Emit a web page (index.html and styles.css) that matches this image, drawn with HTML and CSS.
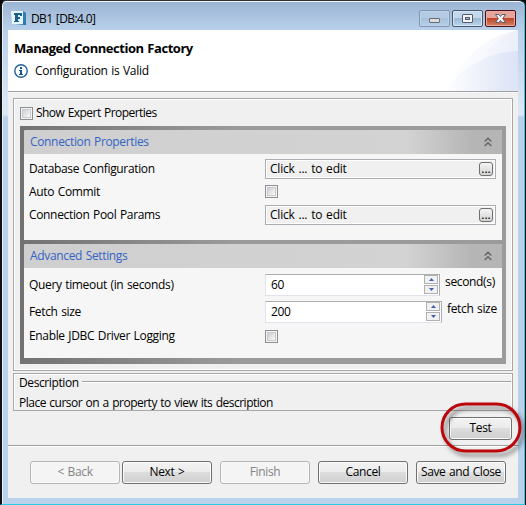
FILE: index.html
```html
<!DOCTYPE html>
<html lang="en">
<head>
<meta charset="utf-8">
<title>DB1 [DB:4.0]</title>
<link rel="stylesheet" href="styles.css">
</head>
<body>
<div class="window">
  <div class="titlebar">
    <svg class="app-icon" width="16" height="16" viewBox="0 0 16 16"><path d="M1 1L13 2L15 4V15L4 14L1 13Z" fill="#1d6d9e"/><path d="M0 1H12V14H1Z" fill="#eaf5fb"/><path d="M12 1L15 3V14L12 13Z" fill="#2b80b4"/><path d="M3 3H11V6H9V5H7V7H9V9H7V11H8V12H3V11H4V5H3Z" fill="#17618e"/></svg>
    <span class="title">DB1 [DB:4.0]</span>
    <div class="controls">
      <span class="control min"><svg width="29" height="15"><rect x="9.5" y="7.5" width="10" height="4" rx=".5" fill="#ddd" stroke="#666c74"/></svg></span>
      <span class="control max"><svg width="29" height="15"><rect x="9.5" y="3.5" width="10" height="8" rx=".5" fill="#f4f4f4" stroke="#55596c"/><rect x="12.500" y="6.500" width="4" height="2" fill="#9bbbd9" stroke="#55596c"/></svg></span>
      <span class="control close"><svg width="29" height="15"><path d="M9.500 3.500H13L14.500 5.500L16 3.500H19.500L16.700 7.500L19.500 11.500H16L14.500 9.500L13 11.500H9.500L12.300 7.500Z" fill="#f5f5f5" stroke="#58606c"/></svg></span>
    </div>
  </div>
  <div class="content">
    <header class="banner">
      <svg class="swoosh" width="80" height="61" viewBox="0 0 80 61"><defs><linearGradient id="a"><stop stop-color="#fff"/><stop offset="1" stop-color="#e6ebf8"/></linearGradient><linearGradient id="b"><stop stop-color="#fff"/><stop offset="1" stop-color="#dce3f6"/></linearGradient></defs><path d="M6 61Q36 7 80 0V61Z" fill="url(#a)" opacity=".55"/><path d="M36 42Q54 8 80 0V61H20Z" fill="url(#a)" opacity=".65"/><path d="M6 61Q38 22 80 21V61Z" fill="url(#b)"/></svg>
      <h1>Managed Connection Factory</h1>
      <p class="status"><svg width="14" height="14"><circle cx="7" cy="7" r="6.200" fill="#fff" stroke="#22639c" stroke-width="1.400"/><path d="M6 3H8V5H6ZM5 6H8V10H9V11H5V10H6V7H5Z" fill="#15568f"/></svg><span>Configuration is Valid</span></p>
    </header>
    <main>
      <div class="group">
        <label class="expert"><span class="check"></span><span>Show Expert Properties</span></label>
        <div class="panel">
          <section>
            <h2><span>Connection Properties</span><svg width="8" height="10"><path d="M.7 4.500L4 1.300L7.300 4.500M.7 9L4 5.800L7.300 9" fill="none" stroke="#666" stroke-width="1.500"/></svg></h2>
            <div class="rows connection">
              <span>Database Configuration</span><div class="field"><span>Click ... to edit</span><b>...</b></div>
              <span>Auto Commit</span><span class="check"></span>
              <span>Connection Pool Params</span><div class="field"><span>Click ... to edit</span><b>...</b></div>
            </div>
          </section>
          <section>
            <h2><span>Advanced Settings</span><svg width="8" height="10"><path d="M.7 4.500L4 1.300L7.300 4.500M.7 9L4 5.800L7.300 9" fill="none" stroke="#666" stroke-width="1.500"/></svg></h2>
            <div class="rows advanced">
              <span>Query timeout (in seconds)</span>
              <div class="value"><div class="spinner"><span>60</span><div class="arrows"><i><svg width="5" height="3"><path d="M0 3L2.500 0L5 3Z"/></svg></i><i><svg width="5" height="3"><path d="M0 0L2.500 3L5 0Z"/></svg></i></div></div><span class="unit">second(s)</span></div>
              <span>Fetch size</span>
              <div class="value"><div class="spinner wide"><span>200</span><div class="arrows"><i><svg width="5" height="3"><path d="M0 3L2.500 0L5 3Z"/></svg></i><i><svg width="5" height="3"><path d="M0 0L2.500 3L5 0Z"/></svg></i></div></div><span class="unit">fetch size</span></div>
              <span>Enable JDBC Driver Logging</span><span class="check"></span>
            </div>
          </section>
        </div>
      </div>
      <div class="description">
        <div class="legend"><span>Description</span><hr></div>
        <p>Place cursor on a property to view its description</p>
      </div>
      <div class="test-row"><div class="test-wrap"><button class="test">Test</button><svg class="highlight" width="96" height="66"><rect x="9" y="9" width="78" height="47" rx="23.500" fill="none" stroke="#bb070b" stroke-width="3"/></svg></div></div>
    </main>
    <footer>
      <button disabled>&lt; Back</button><button>Next &gt;</button><button class="spaced" disabled>Finish</button><button class="spaced">Cancel</button><button class="spaced save">Save and Close</button>
    </footer>
  </div>
</div>
</body>
</html>
```
FILE: styles.css
```css
* { box-sizing: border-box; }
body { margin: 0; background: #080808; font: 12px/16px "Open Sans", "Noto Sans", sans-serif; letter-spacing: -.34px; word-spacing: .8px; color: #000; white-space: nowrap; overflow: hidden; }
h1, h2, p, hr { margin: 0; font-weight: 400; }
svg { display: block; flex: none; }
.window { width: 525px; height: 505px; padding: 0 6px 6px; border: 1px solid #29cbe3; border-width: 1px 1px 1px 2px; border-top-color: #2e3035; border-left-color: #111; border-radius: 6px 6px 0 0; background: linear-gradient(#9bb4d3, #b9d1ea 30px, #dce8f6 110px, #dce8f6 114px, #b9d1ea 116px); box-shadow: inset 0 1px #f4f7fb, inset 1px 0 #e8f1fa; }
.titlebar { height: 29px; display: flex; align-items: flex-start; padding: 9px 2px 0 3px; }
.title { margin: 1px 0 0 4px; letter-spacing: -.6px; }
.controls { display: flex; gap: 2px; margin-left: auto; }
.control { width: 31px; height: 17px; border: 1px solid #48586e; border-radius: 2px; background: linear-gradient(#c4d8ec 49%, #9db9d5 50%, #bbd4ec); box-shadow: inset 0 0 0 1px #d5e5f4; }
.min { border-color: #8095b1; background: linear-gradient(#b4cae3 49%, #a8c0da 50%, #b7d0e9); box-shadow: inset 0 0 0 1px #bfd3e8; }
.close { border-color: #4a1119; background: linear-gradient(#e7a49b 48%, #c14628 50%, #d38062); box-shadow: inset 0 0 0 1px #e7aaa0; }
.content { height: 468px; width: 510px; background: #f0f0f0; }
.banner { position: relative; height: 63px; padding: 9px 6px; background: #fff; border-bottom: 1px solid #f8f8f8; box-shadow: inset 0 -1px #a0a0a0; }
.swoosh { position: absolute; right: 0; top: 0; }
h1 { font-size: 13px; line-height: 18px; font-weight: 700; letter-spacing: -.46px; }
.status { display: flex; align-items: center; gap: 7px; height: 16px; margin-top: 6px; letter-spacing: -.3px; }
main { padding: 5px 5px 0; height: 352px; }
.group { width: 500px; height: 273px; padding: 7px 6px 0; border: 1px solid #a8a8a8; box-shadow: inset -1px -1px #fff, inset 1px 1px #fff; }
.expert { display: flex; align-items: center; gap: 3px; height: 14px; margin-bottom: 6px; letter-spacing: -.54px; }
.check { display: block; width: 13px; height: 13px; border: 1px solid #8e8f8f; background: linear-gradient(135deg, #bcc1c8, #f5f5f5 75%); box-shadow: inset 0 0 0 1px #f4f4f4, inset 0 0 0 2px #c8cbcf; }
.panel { width: 486px; height: 238px; padding: 4px 4px 6px; display: grid; grid-template-rows: 110px 114px; gap: 4px; background: linear-gradient(90deg, #727272, #9b9b9b 45%); }
section { background: #f6f6f6; border-radius: 2px 2px 0 0; overflow: hidden; }
h2 { height: 24px; padding: 0 10px 0 6px; display: flex; align-items: center; justify-content: space-between; font-size: 12px; color: #3363c5; background: linear-gradient(90deg, #cfcfcf, #d3d3d3 80%, #b5b5b5 94%); }
h2 svg { margin-top: -1px; }
.rows { display: grid; grid-template-columns: 236px 232px; padding-left: 5px; align-items: center; }
.connection { padding-top: 3px; grid-template-rows: 23px 23px 23px; }
.field { width: 231px; height: 20px; border: 1px solid #abadb3; box-shadow: inset 0 0 0 1px #fff; background: #f0f0f0; display: flex; align-items: center; padding: 0 2px 0 4px; justify-content: space-between; letter-spacing: -.22px; word-spacing: 1px; }
.field b { width: 14px; height: 14px; border: 1px solid #707070; border-radius: 3px; background: linear-gradient(#f5f5f5, #d2d2d2); text-align: center; line-height: 11px; letter-spacing: 0; font-weight: 400; }
.advanced { padding-top: 3px; grid-template-rows: 27px 27px 22px; align-items: center; }
.value { display: flex; gap: 5px; }
.spinner { width: 175px; height: 22px; border: 1px solid #e2e3ea; border-top-color: #abadb3; border-right-color: #abadb3; background: #fff; padding: 0 1px 0 5px; display: flex; justify-content: space-between; align-items: center; }
.wide { width: 177px; }
.arrows { display: grid; grid-template-rows: 9px 9px; gap: 1px; width: 14px; }
.arrows i { border: 1px solid #b0b0b5; background: #f1f1f1; display: grid; place-items: center; }
.arrows path { fill: #435fad; }
.description { width: 500px; height: 38px; margin-top: 2px; border: 1px solid #a8a8a8; box-shadow: inset 1px 1px #fff, inset -1px 0 #fff; padding: 1px 1px 0 5px; }
.legend { display: flex; gap: 3px; height: 16px; letter-spacing: -.4px; }
.legend hr { flex: 1; height: 2px; margin-top: 6px; border: 0; background: #fff; border-top: 1px solid #a0a0a0; }
.description p { margin-top: 4px; height: 15px; line-height: 16px; letter-spacing: -.5px; }
.test-row { display: flex; justify-content: flex-end; padding: 6px 1px 0; }
.test-wrap { position: relative; height: 23px; }
.highlight { position: absolute; left: -16px; top: -22px; filter: drop-shadow(3px 4px 2px rgba(0,0,0,.45)); }
button { width: 90px; height: 23px; padding: 0 0 1px; border: 1px solid #707070; border-radius: 3px; background: linear-gradient(#f3f3f3, #ebebeb 49%, #dddddd 50%, #cfcfcf); box-shadow: inset 0 0 0 1px #fafafa; font: inherit; letter-spacing: inherit; word-spacing: inherit; color: #000; }
button:disabled { border-color: #b2b5b5; background: #f4f4f4; color: #838383; }
.test { width: 63px; }
footer { height: 53px; border-top: 1px solid #a0a0a0; box-shadow: inset 0 1px #fff; padding: 15px 0 0 22px; display: flex; gap: 2px; }
.spaced { margin-left: 6px; }
.save { letter-spacing: -.4px; }
```
